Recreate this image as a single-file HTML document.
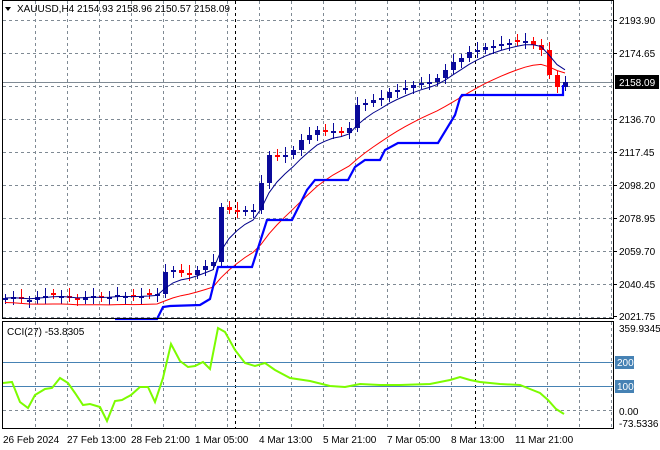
<!DOCTYPE html>
<html><head><meta charset="utf-8"><style>
html,body{margin:0;padding:0;background:#fff;width:660px;height:450px;overflow:hidden}
svg{display:block}
text{font-family:"Liberation Sans",sans-serif;font-size:10px;fill:#000}
</style></head><body>
<svg id="s" width="660" height="450" xmlns="http://www.w3.org/2000/svg">
<g id="grid" stroke="#7f8a94" stroke-dasharray="3,3" stroke-width="1"></g>
<line x1="235.5" y1="1" x2="235.5" y2="429" stroke="#000" stroke-dasharray="3,3"/>
<line x1="475.5" y1="1" x2="475.5" y2="429" stroke="#000" stroke-dasharray="3,3"/>
<line x1="2" y1="82.5" x2="613" y2="82.5" stroke="#7f8a94"/>
<line x1="2" y1="362.5" x2="613" y2="362.5" stroke="#4682b4"/>
<line x1="2" y1="386.5" x2="613" y2="386.5" stroke="#4682b4"/>
<g id="ch"></g>
<rect x="2.5" y="0.5" width="611" height="318" fill="none" stroke="#000"/>
<rect x="2.5" y="321.5" width="611" height="107" fill="none" stroke="#000"/>
<polygon points="5,7 11,7 8,11" fill="#000"/>
<text x="17" y="12">XAUUSD,H4  2154.93 2158.96 2150.57 2158.09</text>
<text x="7" y="335">CCI(27) -53.8305</text>
<g id="ax"></g>
<rect x="615" y="75" width="44" height="14" fill="#000"/>
<text x="619" y="86" style="fill:#fff">2158.09</text>
<rect x="615" y="356" width="19" height="13" fill="#4682b4"/>
<text x="617" y="366" style="fill:#fff">200</text>
<rect x="615" y="380" width="19" height="13" fill="#4682b4"/>
<text x="617" y="390" style="fill:#fff">100</text>
<text x="619" y="332">359.9345</text>
<text x="619" y="415">0.00</text>
<text x="619" y="427">-73.5336</text>
<text x="3" y="443">26 Feb 2024</text>
<text x="67" y="443">27 Feb 13:00</text>
<text x="131" y="443">28 Feb 21:00</text>
<text x="195" y="443">1 Mar 05:00</text>
<text x="259" y="443">4 Mar 13:00</text>
<text x="323" y="443">5 Mar 21:00</text>
<text x="387" y="443">7 Mar 05:00</text>
<text x="451" y="443">8 Mar 13:00</text>
<text x="515" y="443">11 Mar 21:00</text>
</svg>
<script>
(function(){
var NS="http://www.w3.org/2000/svg";
function el(p,t,a){var e=document.createElementNS(NS,t);for(var k in a)e.setAttribute(k,a[k]);p.appendChild(e);return e;}
var g=document.getElementById('grid');
for(var x=35;x<613;x+=32){el(g,'line',{x1:x+.5,y1:1,x2:x+.5,y2:318});el(g,'line',{x1:x+.5,y1:322,x2:x+.5,y2:428});}
for(var i=0;i<10;i++){var y=20+i*33;if(y>317)y=316;el(g,'line',{x1:3,y1:y+.5,x2:613,y2:y+.5});}
el(g,'line',{x1:3,y1:410.5,x2:613,y2:410.5});
var ax=document.getElementById('ax');
var labs=["2193.90","2174.65","2155.40","2136.70","2117.45","2098.20","2078.95","2059.70","2040.45","2021.75"];
for(var i=0;i<10;i++){if(i==2)continue;var y=20+i*33;if(i==9)y=316;el(ax,'line',{x1:613,y1:y+.5,x2:617,y2:y+.5,stroke:'#000'});var t=el(ax,'text',{x:619,y:y+4});t.textContent=labs[i];}
var c=[298,297,299,300,297,296,295,296,298,300,297,296,298,297,295,296,297,296,295,294,272,270,273,275,270,266,262,207,210,212,210,210,183,155,157,155,150,140,135,130,132,131,133,128,105,103,100,98,92,90,88,85,83,82,78,70,62,58,52,50,47,46,44,43,42,41,45,50,75,87,82];
var ch=document.getElementById('ch');
var fast=[],slow=[],ef=c[0],es=c[0]+4;
for(var i=0;i<c.length;i++){
 var o=i?c[i-1]:c[0]+2,cl=c[i],x=5+8*i;
 if(Math.abs(o-cl)<2){o=cl+(i%2?2:-2);}
 var tp=Math.min(o,cl),bt=Math.max(o,cl);
 var col=cl<o?'#0a0a9a':'#ff0000';
 el(ch,'line',{x1:x+.5,y1:tp-4-(i%3)*2,x2:x+.5,y2:bt+4+(i%2)*2,stroke:col});
 el(ch,'rect',{x:x-2,y:tp,width:5,height:Math.max(bt-tp,2),fill:col});
 ef=ef+(cl-ef)*0.3;es=es+(cl+8-es)*0.13;fast.push(x+','+ef.toFixed(1));slow.push(x+','+es.toFixed(1));
}
el(ch,'polyline',{points:slow.join(' '),fill:'none',stroke:'#ff0000','stroke-width':1});
el(ch,'polyline',{points:fast.join(' '),fill:'none',stroke:'#00008b','stroke-width':1});
el(ch,'polyline',{points:"115,319 157,319 163,307 170,306 200,305 210,299 218,267 252,267 267,220 292,220 307,190 315,180 348,180 355,167 365,160 380,160 385,150 398,143 438,143 455,115 460,98 462,95 563,95 563,85",fill:'none',stroke:'#0000ff','stroke-width':2.2});
el(ch,'polyline',{points:"3,383 12,382 20,402 28,408 35,395 45,389 52,388 60,378 68,383 75,393 83,405 90,404 100,407 107,421 115,401 122,400 131,395 140,387 148,387 155,402 163,378 171,344 180,361 188,367 195,366 203,362 210,369 218,328 225,332 235,350 245,363 255,366 265,363 275,370 290,378 310,381 330,386 345,387 360,384 380,385 400,385 430,384 450,380 460,377 470,380 480,382 500,384 520,385 530,389 540,393 548,400 556,409 564,414",fill:'none',stroke:'#7cfc00','stroke-width':2});
})();
</script>
</body></html>
